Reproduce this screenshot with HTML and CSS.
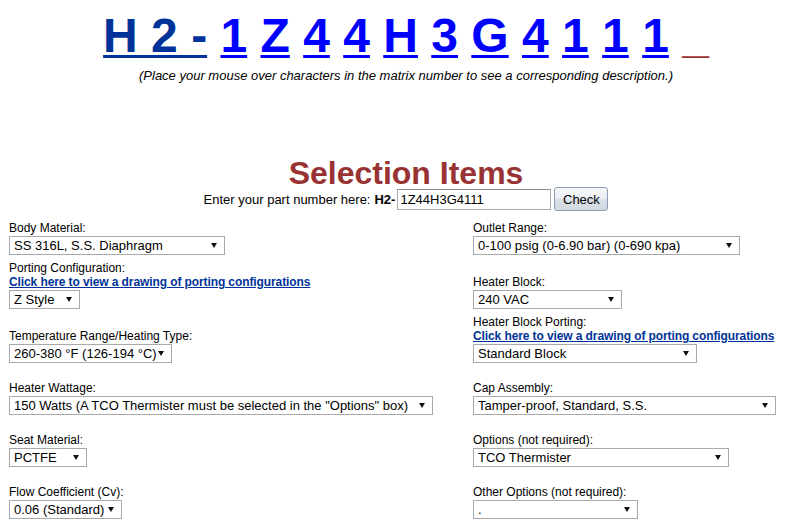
FILE: index.html
```html
<!DOCTYPE html>
<html lang="en">

<head>
    <meta charset="UTF-8">
    <meta name="viewport" content="width=device-width, initial-scale=1.0">
    <title>Matrix Number Builder</title>
    <link rel="stylesheet" href="styles.css">
</head>

<body>
    <div class="page">
        <div class="matrix">
            <a class="base" href="#">H 2 -</a> <a href="#">1</a> <a href="#">Z</a> <a href="#">4</a> <a href="#">4</a> <a href="#">H</a> <a href="#">3</a> <a href="#">G</a> <a href="#">4</a> <a href="#">1</a> <a href="#">1</a> <a href="#">1</a> <span class="blank">_</span>
        </div>
        <p class="hint">(Place your mouse over characters in the matrix number to see a corresponding description.)</p>

        <h1 class="title">Selection Items</h1>
        <form class="check">
            <span class="check-label">Enter your part number here:</span>
            <b class="prefix">H2-</b>
            <input class="part-input" type="text" value="1Z44H3G4111">
            <button class="check-btn" type="button">Check</button>
        </form>

        <div class="fields">
            <div class="field">
                <div class="field-label">Body Material:</div>
                <select class="sel-body">
                    <option>SS 316L, S.S. Diaphragm</option>
                </select>
            </div>
            <div class="field">
                <div class="field-label">Outlet Range:</div>
                <select class="sel-outlet">
                    <option>0-100 psig (0-6.90 bar) (0-690 kpa)</option>
                </select>
            </div>

            <div class="field">
                <div class="field-label">Porting Configuration:</div>
                <div class="field-link"><a href="#">Click here to view a drawing of porting configurations</a></div>
                <select class="sel-porting">
                    <option>Z Style</option>
                </select>
            </div>
            <div class="field">
                <div class="field-label">Heater Block:</div>
                <select class="sel-heater">
                    <option>240 VAC</option>
                </select>
            </div>

            <div class="field">
                <div class="field-label">Temperature Range/Heating Type:</div>
                <select class="sel-temp">
                    <option>260-380 &deg;F (126-194 &deg;C)</option>
                </select>
            </div>
            <div class="field">
                <div class="field-label">Heater Block Porting:</div>
                <div class="field-link"><a href="#">Click here to view a drawing of porting configurations</a></div>
                <select class="sel-block">
                    <option>Standard Block</option>
                </select>
            </div>

            <div class="field">
                <div class="field-label">Heater Wattage:</div>
                <select class="sel-watt">
                    <option>150 Watts (A TCO Thermister must be selected in the "Options" box)</option>
                </select>
            </div>
            <div class="field">
                <div class="field-label">Cap Assembly:</div>
                <select class="sel-cap">
                    <option>Tamper-proof, Standard, S.S.</option>
                </select>
            </div>

            <div class="field">
                <div class="field-label">Seat Material:</div>
                <select class="sel-seat">
                    <option>PCTFE</option>
                </select>
            </div>
            <div class="field">
                <div class="field-label">Options (not required):</div>
                <select class="sel-options">
                    <option>TCO Thermister</option>
                </select>
            </div>

            <div class="field">
                <div class="field-label">Flow Coefficient (Cv):</div>
                <select class="sel-flow">
                    <option>0.06 (Standard)</option>
                </select>
            </div>
            <div class="field">
                <div class="field-label">Other Options (not required):</div>
                <select class="sel-other">
                    <option>.</option>
                </select>
            </div>
        </div>
    </div>
</body>

</html>
```

FILE: styles.css
```css
html {
    overflow: hidden;
}

body {
    margin: 8px;
    font-family: 'Liberation Sans', Arial, sans-serif;
    color: #000;
    background-color: white;
}

.page {
    width: 796px;
}

/* big matrix number */
.matrix {
    text-align: center;
    font-size: 48px;
    font-weight: bold;
    line-height: 55px;
    white-space: nowrap;
}

.matrix a {
    color: #0000FF;
    text-decoration: underline;
    text-decoration-thickness: 3px;
    text-underline-offset: 3px;
}

.matrix a.base {
    color: #003399;
}

.matrix .blank {
    color: #993333;
    line-height: 1;
}

.hint {
    margin: 5px 0 0;
    text-align: center;
    font-size: 13px;
    font-style: italic;
    line-height: 15px;
}

.title {
    margin: 77px 0 0;
    text-align: center;
    font-size: 32px;
    font-weight: bold;
    line-height: 27px;
    color: #993333;
}

/* part number check */
.check {
    display: flex;
    justify-content: center;
    align-items: center;
    height: 24px;
    margin: 0;
    font-size: 13px;
}

.check-label {
    margin-right: 4px;
}

.prefix {
    margin-right: 2px;
}

.part-input {
    box-sizing: border-box;
    width: 154px;
    height: 21px;
    margin: 0 3px 0 0;
    padding: 0 2px;
    border: 1px solid #a9a9a9;
    border-top-color: #8e8e8e;
    font: 13px 'Liberation Sans', Arial, sans-serif;
    color: #000;
}

.check-btn {
    box-sizing: border-box;
    width: 54px;
    height: 24px;
    margin: 0;
    padding: 0;
    border: 1px solid #8c9db5;
    border-radius: 3px;
    background: linear-gradient(#f7f8fa, #e9edf2 50%, #dbe1e8 50%, #d3d9e1);
    font: 13px 'Liberation Sans', Arial, sans-serif;
    color: #000;
}

/* selection grid */
.fields {
    display: grid;
    grid-template-columns: 464px 1fr;
    grid-template-rows: 34px 54px 54px 52px 52px 52px;
    margin-top: 10px;
    padding-left: 1px;
}

.field {
    align-self: end;
}

.field-label,
.field-link {
    font-size: 12px;
    line-height: 14px;
}

.field-link a {
    color: #003399;
    font-weight: bold;
    letter-spacing: -0.1px;
    text-decoration: underline;
}

.field select {
    display: block;
    box-sizing: border-box;
    height: 19px;
    margin: 1px 0 0;
    padding: 0 11px 0 4px;
    border: 1px solid #a9a9a9;
    border-radius: 0;
    -webkit-appearance: none;
    appearance: none;
    background: #fff url("data:image/svg+xml,%3Csvg xmlns='http://www.w3.org/2000/svg' width='6' height='5'%3E%3Cpath d='M0 0h6L3 5z' fill='%23111'/%3E%3C/svg%3E") no-repeat right 7px center;
    font: 13px 'Liberation Sans', Arial, sans-serif;
    color: #000;
}

.sel-body { width: 216px; }
.sel-porting { width: 71px; }
.sel-temp { width: 163px; }
.sel-watt { width: 424px; }
.sel-seat { width: 78px; }
.sel-flow { width: 113px; }

.sel-outlet { width: 267px; }
.sel-heater { width: 149px; }
.sel-block { width: 224px; }
.sel-cap { width: 303px; }
.sel-options { width: 256px; }
.sel-other { width: 165px; }
```
